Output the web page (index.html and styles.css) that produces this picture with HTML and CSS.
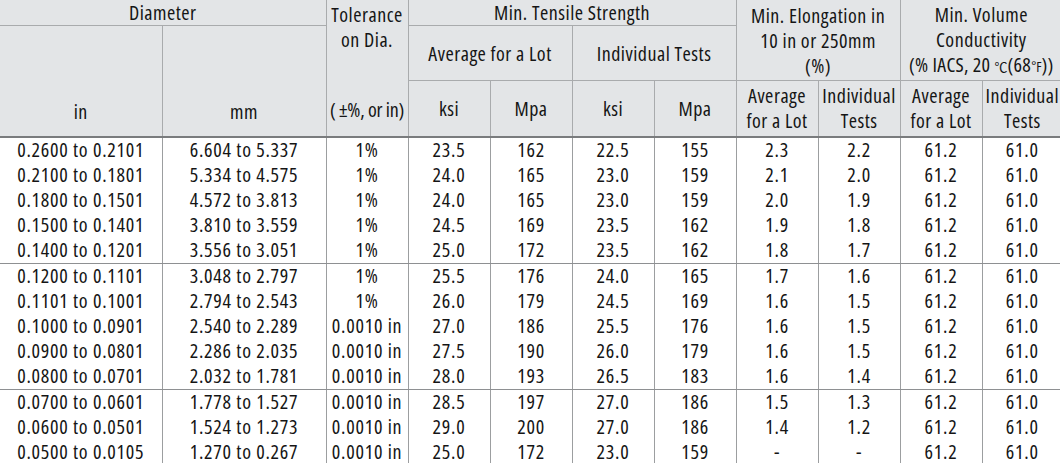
FILE: index.html
```html
<!DOCTYPE html>
<html>
<head>
<meta charset="utf-8">
<link rel="stylesheet" href="styles.css">
</head>
<body>
<table class="spec">
  <colgroup>
    <col class="c-in"><col class="c-mm"><col class="c-tol">
    <col class="c-n"><col class="c-n"><col class="c-n"><col class="c-n">
    <col class="c-n"><col class="c-n"><col class="c-n"><col class="c-last">
  </colgroup>
  <thead>
    <tr class="h1">
      <th colspan="2">Diameter</th>
      <th rowspan="3" class="tol"><div class="tol-box"><span>Tolerance<br>on Dia.</span><span class="tol-unit">( ±%, or in)</span></div></th>
      <th colspan="4">Min. Tensile Strength</th>
      <th colspan="2" rowspan="2" class="multi">Min. Elongation in<br>10 in or 250mm<br>(%)</th>
      <th colspan="2" rowspan="2" class="multi">Min. Volume<br>Conductivity<br><span class="cond">(% IACS, 20 <span class="cel">℃</span>(68<span class="fah">°F</span>))</span></th>
    </tr>
    <tr class="h2">
      <th rowspan="2" class="bottom">in</th>
      <th rowspan="2" class="bottom">mm</th>
      <th colspan="2">Average for a Lot</th>
      <th colspan="2">Individual Tests</th>
    </tr>
    <tr class="h3">
      <th>ksi</th><th>Mpa</th><th>ksi</th><th>Mpa</th>
      <th>Average<br>for a Lot</th><th>Individual<br>Tests</th>
      <th>Average<br>for a Lot</th><th>Individual<br>Tests</th>
    </tr>
  </thead>
  <tbody>
    <tr><td>0.2600 to 0.2101</td><td>6.604 to 5.337</td><td>1%</td><td>23.5</td><td>162</td><td>22.5</td><td>155</td><td>2.3</td><td>2.2</td><td>61.2</td><td>61.0</td></tr>
    <tr><td>0.2100 to 0.1801</td><td>5.334 to 4.575</td><td>1%</td><td>24.0</td><td>165</td><td>23.0</td><td>159</td><td>2.1</td><td>2.0</td><td>61.2</td><td>61.0</td></tr>
    <tr><td>0.1800 to 0.1501</td><td>4.572 to 3.813</td><td>1%</td><td>24.0</td><td>165</td><td>23.0</td><td>159</td><td>2.0</td><td>1.9</td><td>61.2</td><td>61.0</td></tr>
    <tr><td>0.1500 to 0.1401</td><td>3.810 to 3.559</td><td>1%</td><td>24.5</td><td>169</td><td>23.5</td><td>162</td><td>1.9</td><td>1.8</td><td>61.2</td><td>61.0</td></tr>
    <tr class="grp-end"><td>0.1400 to 0.1201</td><td>3.556 to 3.051</td><td>1%</td><td>25.0</td><td>172</td><td>23.5</td><td>162</td><td>1.8</td><td>1.7</td><td>61.2</td><td>61.0</td></tr>
    <tr><td>0.1200 to 0.1101</td><td>3.048 to 2.797</td><td>1%</td><td>25.5</td><td>176</td><td>24.0</td><td>165</td><td>1.7</td><td>1.6</td><td>61.2</td><td>61.0</td></tr>
    <tr><td>0.1101 to 0.1001</td><td>2.794 to 2.543</td><td>1%</td><td>26.0</td><td>179</td><td>24.5</td><td>169</td><td>1.6</td><td>1.5</td><td>61.2</td><td>61.0</td></tr>
    <tr><td>0.1000 to 0.0901</td><td>2.540 to 2.289</td><td>0.0010 in</td><td>27.0</td><td>186</td><td>25.5</td><td>176</td><td>1.6</td><td>1.5</td><td>61.2</td><td>61.0</td></tr>
    <tr><td>0.0900 to 0.0801</td><td>2.286 to 2.035</td><td>0.0010 in</td><td>27.5</td><td>190</td><td>26.0</td><td>179</td><td>1.6</td><td>1.5</td><td>61.2</td><td>61.0</td></tr>
    <tr class="grp-end"><td>0.0800 to 0.0701</td><td>2.032 to 1.781</td><td>0.0010 in</td><td>28.0</td><td>193</td><td>26.5</td><td>183</td><td>1.6</td><td>1.4</td><td>61.2</td><td>61.0</td></tr>
    <tr><td>0.0700 to 0.0601</td><td>1.778 to 1.527</td><td>0.0010 in</td><td>28.5</td><td>197</td><td>27.0</td><td>186</td><td>1.5</td><td>1.3</td><td>61.2</td><td>61.0</td></tr>
    <tr><td>0.0600 to 0.0501</td><td>1.524 to 1.273</td><td>0.0010 in</td><td>29.0</td><td>200</td><td>27.0</td><td>186</td><td>1.4</td><td>1.2</td><td>61.2</td><td>61.0</td></tr>
    <tr><td>0.0500 to 0.0105</td><td>1.270 to 0.267</td><td>0.0010 in</td><td>25.0</td><td>172</td><td>23.0</td><td>159</td><td>-</td><td>-</td><td>61.2</td><td>61.0</td></tr>
  </tbody>
</table>
</body>
</html>
```
FILE: styles.css
```css
html, body {
  margin: 0;
  padding: 0;
  background: #ffffff;
}

.spec {
  width: 1060px;
  table-layout: fixed;
  border-collapse: collapse;
  font-family: "Open Sans", "Liberation Sans", sans-serif;
  font-stretch: 75%;
  font-size: 20px;
  color: #151515;
  line-height: 25px;
}

.c-in { width: 162px; }
.c-mm { width: 164px; }
.c-tol { width: 82px; }
.c-n { width: 82px; }
.c-last { width: 80px; }

.spec th {
  background: #e3e5e7;
  font-weight: normal;
  padding: 0;
  border: 1px solid #a9abad;
  text-align: center;
  vertical-align: middle;
  letter-spacing: 0.5px;
  white-space: nowrap;
}

.spec thead tr:first-child th { border-top: none; }
.spec th:first-child { border-left: none; }
.spec tr th:last-child { border-right: none; }

.h1 { height: 25px; }
.h2 { height: 55px; }
.h3 { height: 56px; }

.spec .h3 th { border-bottom: 2px solid #7a7c7e; }

.spec th.bottom {
  vertical-align: bottom;
  padding-bottom: 12px;
  border-bottom: 2px solid #7a7c7e;
}

.spec th.tol {
  vertical-align: top;
  border-bottom: 2px solid #7a7c7e;
}

.tol-box {
  display: flex;
  flex-direction: column;
  justify-content: space-between;
  height: 133px;
  padding: 2px 0 11px;
  box-sizing: border-box;
}

.tol-unit { letter-spacing: -0.2px; }

.multi { vertical-align: top; }

.cond { letter-spacing: 0.3px; }

.cel {
  font-family: "Noto Sans CJK SC", "DejaVu Sans", sans-serif;
  font-size: 13px;
  letter-spacing: 0;
}

.fah { font-size: 14px; letter-spacing: 0; }

.spec td {
  padding: 0 0 2px;
  height: 23px;
  line-height: 23px;
  text-align: center;
  vertical-align: middle;
  letter-spacing: 0.75px;
  border-left: 1px solid #9c9ea0;
  border-right: 1px solid #9c9ea0;
  white-space: nowrap;
}

.spec td:first-child { border-left: none; }
.spec td:last-child { border-right: none; }

.spec tr.grp-end td { border-bottom: 1px solid #8e9092; }
```
